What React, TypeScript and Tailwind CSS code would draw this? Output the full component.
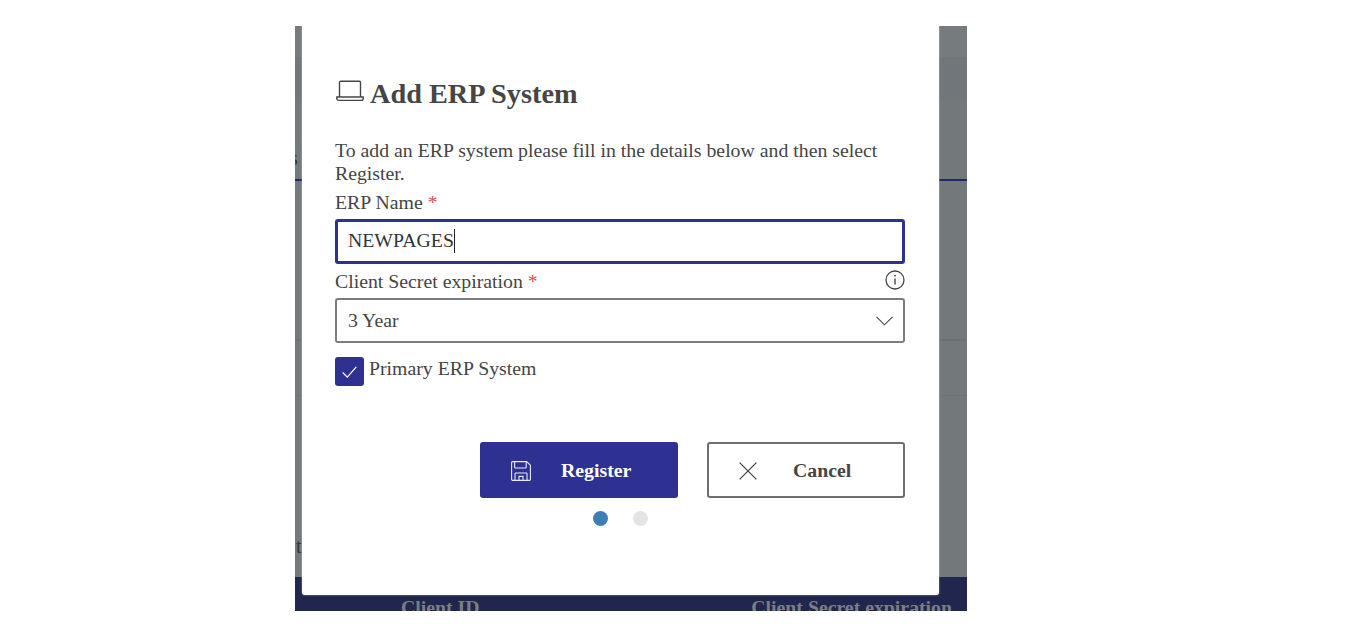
const serif = { fontFamily: '"Liberation Serif", serif' };

function LaptopIcon() {
  return (
    <svg width="28" height="22" viewBox="0 0 28 22" fill="none" stroke="#454545" strokeWidth="1.4" className="-mt-[7px] shrink-0">
      <path d="M3.5 17V2.5a1.2 1.2 0 0 1 1.2-1.2h18.6a1.2 1.2 0 0 1 1.2 1.2V17" />
      <path d="M.8 17h26.4v1.4a2 2 0 0 1-2 2H2.8a2 2 0 0 1-2-2z" />
    </svg>
  );
}

function InfoIcon() {
  return (
    <svg width="20" height="20" viewBox="0 0 20 20" fill="none" stroke="#454545" className="-mt-[4px] shrink-0">
      <circle cx="10" cy="10" r="9" strokeWidth="1.3" />
      <path d="M10 8.5v6" strokeWidth="1.4" />
      <path d="M10 5v1.6" strokeWidth="1.6" />
    </svg>
  );
}

function SaveIcon() {
  return (
    <svg width="20" height="20" viewBox="0 0 20 20" fill="none" stroke="#ffffff" strokeWidth="1.1" className="shrink-0 opacity-90">
      <path d="M1.5.6h14.2l3.7 3.7v13.9a1.2 1.2 0 0 1-1.2 1.2H1.8a1.2 1.2 0 0 1-1.2-1.2V1.5a.9.9 0 0 1 .9-.9z" />
      <path d="M3.6.6v5.6a.8.8 0 0 0 .8.8h10a.8.8 0 0 0 .8-.8V.6" />
      <path d="M4 19.4v-6.6a.8.8 0 0 1 .8-.8h10.4a.8.8 0 0 1 .8.8v6.6" />
      <path d="M8 19.4v-4h4v4" />
    </svg>
  );
}

export default function App() {
  return (
    <div className="h-[627px] w-[1372px] overflow-hidden bg-white pl-[295px] pt-[26px]" style={serif}>
      <div className="relative h-[585px] w-[672px] overflow-hidden bg-[#73787b]">
        {/* Page behind the modal */}
        <div className="flex h-full flex-col">
          <div className="h-[31px] shrink-0 bg-[#767b7e]" />
          <div className="h-[44px] shrink-0 bg-[#71767a]" />
          <div className="flex h-[80px] shrink-0 items-end border-b-2 border-[#23286a] text-[20px] leading-[24px] text-[#33363a]">
            <span className="-ml-[5px] mb-[9px]">s</span>
          </div>
          <div className="h-[160px] shrink-0 border-b-2 border-[#6c7174]" />
          <div className="h-[55px] shrink-0 border-b border-[#6e7376]" />
          <div className="flex h-[181px] shrink-0 items-end text-[20px] leading-[24px] text-[#33363a]">
            <span className="ml-[1px] mb-[19px]">t</span>
          </div>
          <div className="flex h-[34px] shrink-0 justify-between overflow-hidden bg-[#21264f] pl-[106px] pr-[15px] pt-[18px] text-[19.8px] font-bold leading-[24px] text-[#7b7e85]">
            <span>Client ID</span>
            <span>Client Secret expiration</span>
          </div>
        </div>

        {/* Modal */}
        <div className="absolute left-[7px] top-0 flex h-[569px] w-[637px] flex-col rounded-b-[3px] bg-white pl-[33px] pr-[34px] pt-[48px] text-[#454545] shadow-[0_0_2px_rgba(255,255,255,0.6)]">
          <div className="flex h-[40px] items-center">
            <div className="ml-[1px] flex">
              <LaptopIcon />
            </div>
            <h2 className="ml-[6px] text-[28.3px] font-bold leading-[40px]">Add ERP System</h2>
          </div>

          <p className="mt-[25px] text-[19.8px] leading-[23px]">
            To add an ERP system please fill in the details below and then select Register.
          </p>

          <label className="mt-[6px] block text-[19.8px] leading-[23px]">
            ERP Name <span className="text-[#e5484d]">*</span>
          </label>
          <div className="mt-[5px] flex h-[45px] items-center rounded-[3px] border-[3px] border-[#2e3192] pb-[2px] pl-[10px] text-[19.8px] text-[#333333]">
            NEWPAGES
            <span className="h-[24px] w-px bg-[#222222]" />
          </div>

          <div className="mt-[6px] flex items-center justify-between text-[19.8px] leading-[23px]">
            <span>
              Client Secret expiration <span className="text-[#e5484d]">*</span>
            </span>
            <InfoIcon />
          </div>
          <div className="mt-[5px] flex h-[45px] items-center justify-between rounded-[3px] border-2 border-[#7c7c7c] pl-[11px] pr-[10px] text-[19.8px]">
            <span>3 Year</span>
            <svg width="17" height="10" viewBox="0 0 17 10" fill="none" stroke="#454545" strokeWidth="1.1">
              <path d="M.5.8l8 8 8-8" />
            </svg>
          </div>

          <div className="mt-[14px] flex items-start gap-[5px]">
            <span className="flex h-[29px] w-[29px] items-center justify-center rounded-[3px] bg-[#2e3192]">
              <svg width="15" height="12" viewBox="0 0 16 13" fill="none" stroke="#ffffff" strokeWidth="1.3">
                <path d="M.6 7l5 5 9.8-11" />
              </svg>
            </span>
            <span className="text-[19.8px] leading-[23px]">Primary ERP System</span>
          </div>

          <div className="mt-[56px] flex justify-end gap-[29px]">
            <button className="flex h-[56px] w-[198px] items-center rounded-[3px] bg-[#2e3192] pl-[31px] pt-[1px] text-[19.8px] font-bold text-white">
              <SaveIcon />
              <span className="ml-[30px]">Register</span>
            </button>
            <button className="flex h-[56px] w-[198px] items-center rounded-[3px] border-2 border-[#6e6e6e] pl-[30px] pt-[1px] text-[19.8px] font-bold text-[#454545]">
              <svg width="18" height="18" viewBox="0 0 18 18" fill="none" stroke="#454545" strokeWidth="1.3" className="shrink-0">
                <path d="M.6.6l16.8 16.8M17.4.6L.6 17.4" />
              </svg>
              <span className="ml-[36px]">Cancel</span>
            </button>
          </div>

          <div className="mt-[13px] flex justify-center gap-[25px] pl-[1px] pr-[1px]">
            <span className="h-[15px] w-[15px] rounded-full bg-[#3f7eb3]" />
            <span className="h-[15px] w-[15px] rounded-full bg-[#e4e4e4]" />
          </div>
        </div>
      </div>
    </div>
  );
}
